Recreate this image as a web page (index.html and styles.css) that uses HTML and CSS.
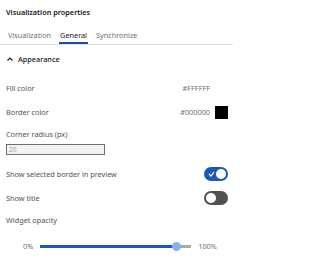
FILE: index.html
```html
<!DOCTYPE html>
<html>
<head>
<meta charset="utf-8">
<link rel="stylesheet" href="styles.css">
</head>
<body>
<div class="panel">
  <div class="title">Visualization properties</div>
  <div class="tabs">
    <div class="tab">Visualization</div>
    <div class="tab active">General</div>
    <div class="tab">Synchronize</div>
  </div>
  <div class="section-head">
    <svg class="chev" width="6" height="4" viewBox="0 0 6 4"><path d="M0.5 3.5 L3 1 L5.5 3.5" fill="none" stroke="#161616" stroke-width="1.1"/></svg>
    <span>Appearance</span>
  </div>
  <div class="row fill">
    <span class="label">Fill color</span>
    <span class="value">#FFFFFF</span>
  </div>
  <div class="row border">
    <span class="label">Border color</span>
    <span class="value">#000000</span>
    <span class="swatch"></span>
  </div>
  <div class="label radius-label">Corner radius (px)</div>
  <div class="input">20</div>
  <div class="row toggle-row first">
    <span class="label">Show selected border in preview</span>
    <span class="toggle on"><svg width="7" height="6" viewBox="0 0 7 6"><path d="M1 3 L3 5 L6 1" fill="none" stroke="#fff" stroke-width="1.2"/></svg><span class="knob"></span></span>
  </div>
  <div class="row toggle-row">
    <span class="label">Show title</span>
    <span class="toggle off"><span class="knob"></span></span>
  </div>
  <div class="label opacity-label">Widget opacity</div>
  <div class="slider">
    <span class="lim">0%</span>
    <div class="track"><div class="filled" style="width:90%"></div><div class="thumb" style="left:90%"></div></div>
    <span class="lim">100%</span>
  </div>
</div>
</body>
</html>
```
FILE: styles.css
```css
html, body { margin: 0; background: #fff; }
body { font-family: "Noto Sans", "Open Sans", sans-serif; font-size: 7.3px; color: #525252; }
.panel { width: 233px; height: 258px; overflow: hidden; }
.title { padding: 6px 0 0 6px; height: 14px; line-height: 12px; font-weight: 600; color: #161616; }
.tabs { display: flex; gap: 9px; padding: 9px 0 0 8px; height: 15px; border-bottom: 1px solid #e0e0e0; }
.tab { line-height: 12px; color: #6f6f6f; height: 15px; box-sizing: border-box; }
.tab.active { color: #161616; border-bottom: 2px solid #1f4f9b; padding: 0 1px; margin: 0 -1px; }
.section-head { display: flex; align-items: center; gap: 5px; padding-left: 7px; height: 28px; color: #161616; font-weight: 500; }
.section-head span { line-height: 12px; }
.row { display: flex; align-items: center; padding: 0 5px 0 6px; }
.row .label { flex: 1; }
.fill { height: 24px; margin-top: 3px; }
.border { height: 24px; }
.value { color: #6f6f6f; }
.border .value { margin-right: 5px; }
.fill .value { margin-right: 18px; }
.swatch { width: 13px; height: 13px; background: #000; }
.radius-label { padding: 4px 0 0 6px; line-height: 12px; height: 15px; }
.input { margin: 1px 0 0 6px; width: 99px; height: 11px; box-sizing: border-box; border: 1px solid #6f6f6f; background: #f2f2f2; color: #a8a8a8; font-size: 6.5px; line-height: 9px; padding-left: 2px; }
.toggle-row { height: 24px; }
.toggle-row.first { margin-top: 7px; }
.toggle { position: relative; width: 24px; height: 14px; border-radius: 7px; display: block; }
.toggle.on { background: #1f58b0; }
.toggle.off { background: #525252; }
.toggle svg { position: absolute; left: 4px; top: 4px; }
.knob { position: absolute; top: 2px; width: 10px; height: 10px; border-radius: 50%; background: #fff; }
.on .knob { right: 2px; }
.off .knob { left: 2px; }
.opacity-label { padding: 4px 0 0 6px; line-height: 12px; height: 16px; }
.slider { display: flex; align-items: center; gap: 7px; padding: 10px 0 0 23px; height: 12px; }
.lim { line-height: 12px; color: #6f6f6f; }
.track { position: relative; width: 151px; height: 3px; background: #a8a8a8; }
.filled { height: 3px; background: #1f58b0; }
.thumb { position: absolute; top: -3px; width: 9px; height: 9px; margin-left: -4px; border-radius: 50%; background: #8fb0ee; }
```
